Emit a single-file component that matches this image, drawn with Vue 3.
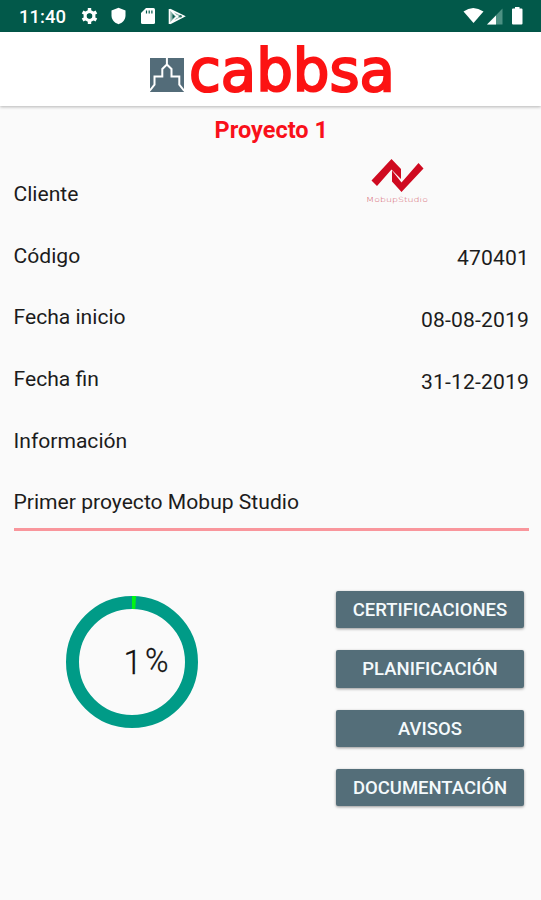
<script setup>
import { ref, computed } from 'vue'

const project = ref({
  name: 'Proyecto 1',
  code: '470401',
  start: '08-08-2019',
  end: '31-12-2019',
  info: 'Primer proyecto Mobup Studio',
  progress: 1,
})

const rows = computed(() => [
  { label: 'Código', value: project.value.code },
  { label: 'Fecha inicio', value: project.value.start },
  { label: 'Fecha fin', value: project.value.end },
  { label: 'Información', value: '' },
])

const actions = ['CERTIFICACIONES', 'PLANIFICACIÓN', 'AVISOS', 'DOCUMENTACIÓN']
</script>

<template>
  <div class="screen">
    <div class="statusbar">
      <span class="clock">11:40</span>
      <svg class="status-icons" width="106" height="20" viewBox="0 0 106 20" fill="#fff">
        <!-- settings -->
        <circle cx="9.5" cy="10" r="4.4" fill="none" stroke="#fff" stroke-width="3.2" />
        <path
          d="M9.5 2v4M9.5 14v4M2.6 6l3.2 1.8M13.2 12.2l3.2 1.8M2.6 14l3.2-1.8M13.2 7.8l3.2-1.8"
          stroke="#fff"
          stroke-width="3.4"
        />
        <circle cx="9.5" cy="10" r="2.5" fill="#02594a" />
        <!-- shield -->
        <path d="M38.5 1.8l7 2.7v5c0 4.2-3 7.4-7 8.7-4-1.3-7-4.5-7-8.7v-5z" />
        <!-- sd card -->
        <path d="M66 2h7.5q1.5 0 1.5 1.5v13q0 1.5-1.5 1.5h-11q-1.5 0-1.5-1.5v-9.5z" />
        <path d="M66.5 4.5v3M69.2 4.5v3M71.9 4.5v3" stroke="#02594a" stroke-width="1.2" />
        <!-- play -->
        <path d="M90 3.5l14 6.7-14 7.3z" fill="#8db5ac" />
        <path d="M90 3.5l14 6.7-14 7.3M90 3.5l8 8M90 17.500l8-8" fill="none" stroke="#fff" stroke-width="1.6" />
        <path d="M89.5 3v15" stroke="#fff" stroke-width="1.6" />
        <path d="M92.5 8v5l2.5-2.5z" fill="#02594a" />
        <circle cx="100.5" cy="10.2" r="1.3" fill="#2c7366" />
      </svg>
      <svg class="signal-icons" width="62" height="20" viewBox="0 0 62 20">
        <path d="M1.5 5.5q9.5-7 20 0L11.5 17z" fill="#fff" />
        <path d="M25 18.5L40.5 2.500v16z" fill="#4d9183" />
        <path d="M25 18.5l9-9v9z" fill="#fff" />
        <path d="M53 2.500v-1.500h4.500v1.500h2q1 0 1 1v14q0 1-1 1h-8.500q-1 0-1-1v-14q0-1 1-1z" fill="#fff" />
      </svg>
    </div>

    <header class="toolbar">
      <svg width="250" height="64" viewBox="0 0 250 64">
        <rect x="2" y="18" width="34" height="34" fill="#536c79" />
        <path
          d="M18.900 18v6.500l-4.600 4.500v7.500H6.500v8.200L1.500 51M18.900 24.500l4.600 4.500v7.500h7.800v8.200l5 6.300"
          fill="none"
          stroke="#fff"
          stroke-width="2"
        />
        <text class="brand" x="41" y="50.6" textLength="206" lengthAdjust="spacingAndGlyphs">cabbsa</text>
      </svg>
    </header>

    <main class="content">
      <h1>{{ project.name }}</h1>

      <div class="row">
        <span>Cliente</span>
        <svg class="client-logo" width="66" height="50" viewBox="0 0 66 50">
          <path d="M6.500 23.500L26.500 2l9.500 10v10L26.500 12.500 12 29z" fill="#cf0a20" />
          <path d="M27 13.500l9.500 12L53.500 6l5 5.500L36.500 35 27 24.500z" fill="#cf0a20" />
          <text x="1" y="44.5" textLength="62" lengthAdjust="spacingAndGlyphs">MobupStudio</text>
        </svg>
      </div>

      <div v-for="row in rows" :key="row.label" class="row">
        <span>{{ row.label }}</span>
        <span class="value">{{ row.value }}</span>
      </div>

      <div class="info">{{ project.info }}</div>

      <section class="bottom">
        <div class="chart">
          <svg width="132" height="132" viewBox="0 0 132 132" fill="none" stroke-width="13">
            <circle cx="66" cy="66" r="59.5" stroke="#009b87" />
            <circle
              cx="66"
              cy="66"
              r="59.5"
              stroke="#00f414"
              pathLength="100"
              :stroke-dasharray="`${project.progress} 100`"
              transform="rotate(-90 66 66)"
            />
            <text class="percent" x="57.5" y="77.5">{{ project.progress }}</text>
            <text class="percent" x="79" y="76" textLength="23.5" lengthAdjust="spacingAndGlyphs">%</text>
          </svg>
        </div>
        <div class="actions">
          <button v-for="action in actions" :key="action">{{ action }}</button>
        </div>
      </section>
    </main>
  </div>
</template>

<style>
body {
  margin: 0;
  background: #fafafa;
}
</style>

<style scoped>
.screen {
  height: 900px;
  overflow: hidden;
  background: #fafafa;
  color: #1c1c1c;
  font-family: Roboto, "Liberation Sans", sans-serif;
}

.statusbar {
  height: 32px;
  box-sizing: border-box;
  display: flex;
  align-items: center;
  padding: 0 17px 0 19px;
  background: #02594a;
  color: #fff;
}
.clock {
  width: 61px;
  font-size: 18.5px;
  font-weight: 500;
  line-height: 32px;
  padding-top: 2px;
}
.signal-icons {
  margin-left: auto;
}

.toolbar {
  height: 74px;
  box-sizing: border-box;
  padding: 8px 0 0 148px;
  background: #fff;
  box-shadow: 0 1px 3px rgba(0, 0, 0, 0.28);
}
.toolbar svg {
  display: block;
  overflow: visible;
}
.brand {
  font-family: "DejaVu Sans", sans-serif;
  font-size: 59px;
  fill: #fc1313;
  stroke: #fc1313;
  stroke-width: 2.2px;
}

.content {
  padding: 0 12px 0 13.5px;
}
h1 {
  margin: 0;
  padding-top: 8px;
  height: 56.5px;
  line-height: 32px;
  box-sizing: border-box;
  text-align: center;
  font-size: 23.5px;
  font-weight: 700;
  color: #f9101a;
}

.row {
  height: 61.8px;
  display: flex;
  justify-content: space-between;
  align-items: center;
  font-size: 21.1px;
}
.client-logo {
  margin: 0 98px 23px 0;
}
.client-logo text {
  font-family: "DejaVu Sans", sans-serif;
  font-weight: 200;
  font-size: 7px;
  fill: #d5606e;
}
.value {
  padding-top: 5px;
  letter-spacing: 0.15px;
}

.info {
  height: 59.5px;
  line-height: 61.5px;
  box-sizing: border-box;
  border-bottom: 3px solid #f9969c;
  font-size: 21.1px;
}

.bottom {
  display: flex;
  justify-content: space-between;
  padding: 60px 5px 0 52.5px;
}
.chart {
  padding-top: 5.5px;
}
.percent {
  font-size: 33px;
  font-weight: 300;
  fill: #111;
  stroke: #111;
  stroke-width: 0.3px;
}
.actions {
  display: flex;
  flex-direction: column;
  gap: 22px;
}
button {
  width: 188px;
  height: 37.3px;
  padding: 1px 0 0;
  border: none;
  border-radius: 2px;
  background: #546e79;
  color: #f4fafc;
  font-family: inherit;
  font-size: 18.5px;
  font-weight: 500;
  box-shadow: 0 1px 3px rgba(0, 0, 0, 0.4);
}
</style>
